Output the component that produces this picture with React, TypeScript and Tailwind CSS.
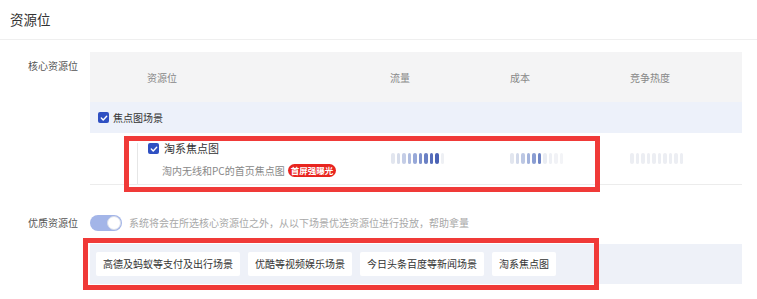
import React from "react";

const Check: React.FC = () => (
  <span className="w-[11px] h-[11px] rounded-[2px] bg-[#2f50c2] flex items-center justify-center shrink-0">
    <svg width="8" height="8" viewBox="0 0 8 8" fill="none">
      <path d="M1.3 4.1 L3.2 5.9 L6.7 2.2" stroke="#fff" strokeWidth="1.4" strokeLinecap="round" strokeLinejoin="round" />
    </svg>
  </span>
);

const Bars: React.FC<{ colors: string[] }> = ({ colors }) => (
  <div className="flex items-center gap-[2px]">
    {colors.map((c, i) => (
      <span key={i} className="w-[3.5px] h-[11px] rounded-[2px]" style={{ backgroundColor: c }} />
    ))}
  </div>
);

const flow = ["#e2e6ef", "#d6dcea", "#c4cde6", "#afbce0", "#97a8d8", "#7e92cd", "#6a80c4", "#566dbb", "#4a62b5", "#eef0f4"];
const cost = ["#e2e6ef", "#d2d9ea", "#bcc7e3", "#a3b3dc", "#8a9dd2", "#6f85c6", "#e9ecf3", "#eef0f5", "#f1f2f6", "#f3f4f7"];
const heat = ["#eceef3", "#eceef3", "#eceef3", "#eceef3", "#eceef3", "#eceef3", "#eceef3", "#eceef3", "#eceef3", "#eceef3"];

const tags = ["高德及蚂蚁等支付及出行场景", "优酷等视频娱乐场景", "今日头条百度等新闻场景", "淘系焦点图"];

const App: React.FC = () => {
  return (
    <div
      className="w-[757px] h-[299px] bg-white relative overflow-hidden"
      style={{ fontFamily: '"Noto Sans CJK SC", "Noto Sans", sans-serif' }}
    >
      <div className="h-[40px] border-b border-[#efefef] px-[10px] flex items-center">
        <span className="text-[13.5px] text-[#333] leading-none">资源位</span>
      </div>

      <div className="flex mt-[12px]">
        <div className="w-[90px] pr-[12px] text-right pt-[8px] text-[10px] text-[#555] leading-[12px]">核心资源位</div>
        <div className="w-[652px]">
          <div className="h-[50px] bg-[#f4f4f5] flex items-center text-[10px] text-[#888]">
            <div className="w-[300px] pl-[57px]">资源位</div>
            <div className="w-[120px]">流量</div>
            <div className="w-[120px]">成本</div>
            <div>竞争热度</div>
          </div>
          <div className="h-[31px] bg-[#edf1fa] flex items-center pl-[8px] gap-[4px]">
            <Check />
            <span className="text-[10px] text-[#333] leading-none">焦点图场景</span>
          </div>
          <div className="h-[52px] border-b border-[#ececec] flex items-center">
            <div className="w-[300px] h-full pl-[47px] pt-[10px]">
              <div className="h-full border-l border-[#e6e6e6] pl-[10px]">
                <div className="flex items-center gap-[5px] h-[11px]">
                  <Check />
                  <span className="text-[11px] text-[#333] leading-none">淘系焦点图</span>
                </div>
                <div className="flex items-center mt-[10px] pl-[14px] h-[13px]">
                  <span className="text-[10px] text-[#888] leading-none">淘内无线和PC的首页焦点图</span>
                  <span className="ml-[3px] h-[13px] px-[3px] rounded-full bg-[#e8251f] text-white text-[8.5px] font-bold leading-[13px]">
                    首屏强曝光
                  </span>
                </div>
              </div>
            </div>
            <div className="w-[120px] pl-[1px]">
              <Bars colors={flow} />
            </div>
            <div className="w-[120px]">
              <Bars colors={cost} />
            </div>
            <div>
              <Bars colors={heat} />
            </div>
          </div>
        </div>
      </div>

      <div className="flex items-center mt-[30px] h-[16px]">
        <div className="w-[90px] pr-[12px] text-right text-[10px] text-[#555] leading-none">优质资源位</div>
        <div className="w-[32px] h-[16px] rounded-full bg-[#a3b5e8] flex items-center justify-end pr-[1px]">
          <span className="w-[14px] h-[14px] rounded-full bg-white border border-[#d8ddea]" />
        </div>
        <span className="ml-[7px] text-[10px] text-[#a8a8a8] leading-none">
          系统将会在所选核心资源位之外，从以下场景优选资源位进行投放，帮助拿量
        </span>
      </div>

      <div className="ml-[90px] mt-[13px] w-[652px] h-[40px] bg-[#eef1f8] flex items-center px-[6px] gap-[8px]">
        {tags.map((t) => (
          <span key={t} className="h-[24px] px-[7px] bg-white rounded-[2px] flex items-center text-[10px] text-[#333] leading-none">
            {t}
          </span>
        ))}
      </div>

      <div className="absolute left-[124px] top-[136px] w-[476px] h-[56px] border-[5px] border-[#f03a38]" />
      <div className="absolute left-[83px] top-[238px] w-[516px] h-[52px] border-[5px] border-[#f03a38]" />
    </div>
  );
};

export default App;
